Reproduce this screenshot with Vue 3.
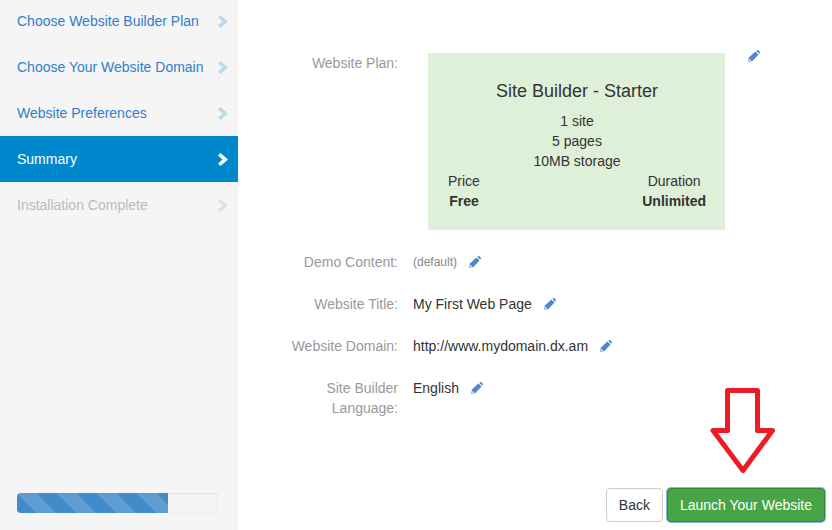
<script setup>
const steps = [
  { label: 'Choose Website Builder Plan', state: 'done' },
  { label: 'Choose Your Website Domain', state: 'done' },
  { label: 'Website Preferences', state: 'done' },
  { label: 'Summary', state: 'active' },
  { label: 'Installation Complete', state: 'disabled' },
]
</script>

<template>
  <div class="page">
    <aside class="sidebar">
      <nav class="steps">
        <a v-for="s in steps" :key="s.label" class="step" :class="s.state">
          <span>{{ s.label }}</span>
          <svg class="chev" viewBox="0 0 10 13" width="10" height="13"><polygon points="0,2.5 2.5,0 10,6.5 2.5,13 0,10.5 4.5,6.5" /></svg>
        </a>
      </nav>
      <div class="progress"><div class="bar"></div></div>
    </aside>

    <main class="main">
      <div class="rows">
        <div class="row plan-row">
          <div class="label">Website Plan:</div>
          <section class="card">
            <h3>Site Builder - Starter</h3>
            <p>1 site</p>
            <p>5 pages</p>
            <p>10MB storage</p>
            <div class="terms">
              <div><div>Price</div><strong>Free</strong></div>
              <div><div>Duration</div><strong>Unlimited</strong></div>
            </div>
          </section>
          <svg class="pencil plan-pencil" viewBox="0 0 13 13" width="12" height="12">
            <path d="M0.3 12.7 L1 8.2 L8 1.6 L11.4 5 L4.8 12 Z" /><path d="M9 .9 L10 .2 Q10.7 -.1 11.5 .4 L12.6 1.5 Q13.2 2.3 12.8 3 L12.1 4 Z" /><path class="nib" d="M1.6 9.6 L3.4 11.4 L2.9 11.8 L1.3 11.8 Z" />
          </svg>
        </div>
        <div class="row">
          <div class="label">Demo Content:</div>
          <div class="value small">(default)</div>
          <svg class="pencil" viewBox="0 0 13 13" width="12" height="12">
            <path d="M0.3 12.7 L1 8.2 L8 1.6 L11.4 5 L4.8 12 Z" /><path d="M9 .9 L10 .2 Q10.7 -.1 11.5 .4 L12.6 1.5 Q13.2 2.3 12.8 3 L12.1 4 Z" /><path class="nib" d="M1.6 9.6 L3.4 11.4 L2.9 11.8 L1.3 11.8 Z" />
          </svg>
        </div>
        <div class="row">
          <div class="label">Website Title:</div>
          <div class="value">My First Web Page</div>
          <svg class="pencil" viewBox="0 0 13 13" width="12" height="12">
            <path d="M0.3 12.7 L1 8.2 L8 1.6 L11.4 5 L4.8 12 Z" /><path d="M9 .9 L10 .2 Q10.7 -.1 11.5 .4 L12.6 1.5 Q13.2 2.3 12.8 3 L12.1 4 Z" /><path class="nib" d="M1.6 9.6 L3.4 11.4 L2.9 11.8 L1.3 11.8 Z" />
          </svg>
        </div>
        <div class="row">
          <div class="label">Website Domain:</div>
          <div class="value">http://www.mydomain.dx.am</div>
          <svg class="pencil" viewBox="0 0 13 13" width="12" height="12">
            <path d="M0.3 12.7 L1 8.2 L8 1.6 L11.4 5 L4.8 12 Z" /><path d="M9 .9 L10 .2 Q10.7 -.1 11.5 .4 L12.6 1.5 Q13.2 2.3 12.8 3 L12.1 4 Z" /><path class="nib" d="M1.6 9.6 L3.4 11.4 L2.9 11.8 L1.3 11.8 Z" />
          </svg>
        </div>
        <div class="row">
          <div class="label">Site Builder<br />Language:</div>
          <div class="value">English</div>
          <svg class="pencil" viewBox="0 0 13 13" width="12" height="12">
            <path d="M0.3 12.7 L1 8.2 L8 1.6 L11.4 5 L4.8 12 Z" /><path d="M9 .9 L10 .2 Q10.7 -.1 11.5 .4 L12.6 1.5 Q13.2 2.3 12.8 3 L12.1 4 Z" /><path class="nib" d="M1.6 9.6 L3.4 11.4 L2.9 11.8 L1.3 11.8 Z" />
          </svg>
        </div>
      </div>

      <footer class="actions">
        <button class="btn back">Back</button>
        <button class="btn launch">Launch Your Website</button>
      </footer>
    </main>

    <svg class="arrow" width="832" height="530" viewBox="0 0 832 530">
      <polygon points="727.5,390.5 757.5,390.5 757.5,430.5 772.5,430.5 743,470.5 713,430.5 727.5,430.5" />
    </svg>
  </div>
</template>

<style>
html, body { margin: 0; background: #fff; }
</style>

<style scoped>
.page {
  position: relative;
  display: flex;
  width: 832px;
  height: 530px;
  overflow: hidden;
  font-family: "Liberation Sans", Arial, sans-serif;
  font-size: 14px;
  line-height: 20px;
  color: #333;
}
.sidebar {
  width: 238px;
  flex: none;
  height: 530px;
  box-sizing: border-box;
  background: #f5f5f5;
  display: flex;
  flex-direction: column;
  justify-content: space-between;
  padding-bottom: 17px;
}
.steps { margin-top: -2px; }
.step {
  display: flex;
  align-items: center;
  justify-content: space-between;
  height: 46px;
  padding: 0 10px 0 17px;
  box-sizing: border-box;
}
.step.done { color: #2f80cb; }
.step.done .chev { fill: #b9d9ec; }
.step.active { background: #0088cc; color: #fff; }
.step.active .chev { fill: #fff; }
.step.disabled { color: #bbb; }
.step.disabled .chev { fill: #e0e0e0; }
.progress {
  width: 201px;
  height: 20px;
  margin-left: 17px;
  box-sizing: border-box;
  border-radius: 4px;
  background: #f5f5f5;
  box-shadow: inset 0 1px 2px rgba(0, 0, 0, .07), inset 0 0 0 1px rgba(0, 0, 0, .025);
  overflow: hidden;
}
.bar {
  width: 151px;
  height: 100%;
  background-color: #428bca;
  background-image: linear-gradient(45deg,
    rgba(255,255,255,.15) 25%, transparent 25%, transparent 50%,
    rgba(255,255,255,.15) 50%, rgba(255,255,255,.15) 75%, transparent 75%, transparent);
  background-size: 40px 40px;
}
.main {
  flex: 1;
  display: flex;
  flex-direction: column;
  justify-content: space-between;
  padding: 53px 7px 8px 0;
}
.rows { display: flex; flex-direction: column; gap: 22px; }
.row { display: flex; align-items: flex-start; }
.label {
  width: 160px;
  margin-right: 15px;
  text-align: right;
  color: #999;
  flex: none;
}
.value { color: #333; }
.value.small { font-size: 12px; color: #888; }
.pencil { margin: 4px 0 0 12px; flex: none; }
.pencil path { fill: #4f87cd; }
.pencil .nib { fill: #dfe9f5; }
.plan-row .label { margin-right: 30px; }
.plan-pencil { margin: -3px 0 0 23px; }
.card {
  width: 297px;
  box-sizing: border-box;
  padding: 28px 19px 19px 20px;
  background: #dff0d8;
  text-align: center;
}
.card h3 {
  margin: 0 0 10px;
  font-size: 18px;
  font-weight: 400;
  line-height: 20px;
}
.card p { margin: 0; }
.terms { display: flex; justify-content: space-between; }
.terms strong { display: block; font-weight: 700; }
.actions { display: flex; justify-content: flex-end; gap: 4px; }
.btn {
  height: 34px;
  padding: 0 12px;
  font: inherit;
  border-radius: 4px;
  border: 1px solid #ccc;
  background: #fff;
  color: #333;
}
.launch {
  background: #47a447;
  border-color: #398439;
  color: #fff;
  box-shadow: 0 0 0 1px #8ab9e6;
}
.arrow { position: absolute; left: 0; top: 0; pointer-events: none; }
.arrow polygon { fill: none; stroke: #ed1c24; stroke-width: 5; stroke-linejoin: round; }
</style>
